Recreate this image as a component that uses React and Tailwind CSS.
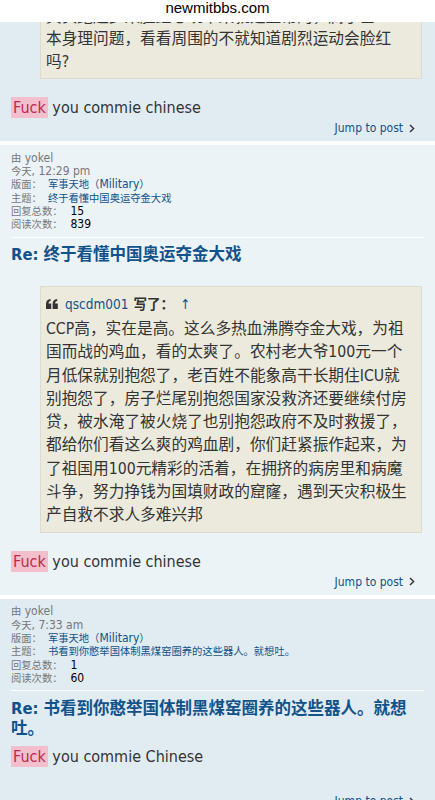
import React from 'react';

const FONT = "font-['DejaVu_Sans_Condensed','DejaVu_Sans','Noto_Sans_CJK_SC',sans-serif]";

// CJK runs in the post info block render a bit smaller than the latin text
function C({ children }) {
  return <span className="text-[10.3px]">{children}</span>;
}

function Meta({ time, topic, replies, views }) {
  return (
    <div className="text-[12px] leading-[13.3px] text-[#777]">
      <div className="h-[13.3px]"><C>由</C> yokel</div>
      <div className="h-[13.3px]"><C>今天</C>{time}</div>
      <div className="h-[13.3px]">
        <C>版面：</C>
        <span className="ml-[6px] text-[#105289]"><C>军事天地（</C>Military<C>）</C></span>
      </div>
      <div className="h-[13.3px]">
        <C>主题：</C>
        <span className="ml-[6px] text-[#105289]"><C>{topic}</C></span>
      </div>
      <div className="h-[13.3px]">
        <C>回复总数：</C>
        <span className="ml-[8px] text-black">{replies}</span>
      </div>
      <div className="h-[13.3px]">
        <C>阅读次数：</C>
        <span className="ml-[8px] text-black">{views}</span>
      </div>
    </div>
  );
}

function Fuck({ text, className = '' }) {
  return (
    <div className={`text-[16px] leading-[21px] text-[#333] ${className}`}>
      <span className="inline-block px-[2px] bg-[#f3bfcc] text-[#bc2a4d]">Fuck</span> {text}
    </div>
  );
}

function Jump({ className = '' }) {
  return (
    <div className={`flex justify-end items-center gap-[6px] pr-[9px] text-[12px] leading-[20px] text-[#105289] ${className}`}>
      <span>Jump to post</span>
      <svg width="6" height="9" viewBox="0 0 6 9" fill="none">
        <path d="M1 1L4.6 4.5L1 8" stroke="#333" strokeWidth="1.4" />
      </svg>
    </div>
  );
}

function QuoteIcon() {
  return (
    <svg width="12" height="10" viewBox="0 0 12 10" fill="#333">
      <path d="M0 5.2C0 2 1.6 0.4 4.6 0V2C3.2 2.3 2.6 3 2.5 4.4H5.2V10H0Z" />
      <path d="M6.6 5.2C6.6 2 8.2 0.4 11.2 0V2C9.8 2.3 9.2 3 9.1 4.4H11.8V10H6.6Z" />
    </svg>
  );
}

export default function App() {
  return (
    <div className={`h-[800px] overflow-hidden bg-white ${FONT}`}>
      <header className="relative z-10 h-[22px] bg-white flex justify-center">
        <span className="font-['Liberation_Sans',sans-serif] text-[15px] leading-[15px] text-black">newmitbbs.com</span>
      </header>

      {/* post partly scrolled away */}
      <div className="overflow-hidden bg-[#e1ebf2] pl-[11px] pr-[11px] pb-[3px] mb-[4px]">
        <div className="-mt-[22.5px] ml-[29px] mr-[2px] border border-[#dbdbce] bg-[#ebeadd] pl-[5px] pr-[10px] pt-[5px] pb-[5px] text-[15.7px] leading-[22.6px] text-[#333]">
          <div>其实跑起步来脸红心跳本来就是正常的，属于基</div>
          <div>本身理问题，看看周围的不就知道剧烈运动会脸红吗?</div>
        </div>
        <Fuck text="you commie chinese" className="mt-[18px]" />
        <Jump />
      </div>

      <div className="bg-[#ecf3f7] pl-[11px] pr-[11px] pt-[6.5px] pb-[3px] mb-[4px]">
        <Meta time=", 12:29 pm" topic="终于看懂中国奥运夺金大戏" replies="15" views="839" />
        <div className="mt-[5px] border-t border-white" />
        <h3 className="mt-[7.5px] pr-[4px] text-[16.5px] leading-[20px] font-bold text-[#105289]">Re: 终于看懂中国奥运夺金大戏</h3>
        <div className="mt-[21px] ml-[29px] mr-[2px] border border-[#dbdbce] bg-[#ebeadd] pl-[5px] pr-[10px] pt-[4px] pb-[6px] text-[#333]">
          <div className="flex items-center text-[13.5px] leading-[26px]">
            <QuoteIcon />
            <span className="ml-[7px] text-[#105289]">qscdm001</span>
            <span className="ml-[5px] font-bold">写了：</span>
            <span className="ml-[6px] text-[#105289]">↑</span>
          </div>
          <div className="text-[15.7px] leading-[23.25px]">
            CCP高，实在是高。这么多热血沸腾夺金大戏，为祖国而战的鸡血，看的太爽了。农村老大爷100元一个月低保就别抱怨了，老百姓不能象高干长期住ICU就别抱怨了，房子烂尾别抱怨国家没救济还要继续付房贷，被水淹了被火烧了也别抱怨政府不及时救援了，都给你们看这么爽的鸡血剧，你们赶紧振作起来，为了祖国用100元精彩的活着，在拥挤的病房里和病魔斗争，努力挣钱为国填财政的窟窿，遇到天灾积极生产自救不求人多难兴邦
          </div>
        </div>
        <Fuck text="you commie chinese" className="mt-[17.5px]" />
        <Jump />
      </div>

      <div className="bg-[#e1ebf2] pl-[11px] pr-[11px] pt-[6.5px] pb-[3px]">
        <Meta time=", 7:33 am" topic="书看到你憨举国体制黑煤窑圈养的这些器人。就想吐。" replies="1" views="60" />
        <div className="mt-[5px] border-t border-white" />
        <h3 className="mt-[7.5px] pr-[4px] text-[16.5px] leading-[20px] font-bold text-[#105289]">Re: 书看到你憨举国体制黑煤窑圈养的这些器人。就想吐。</h3>
        <Fuck text="you commie Chinese" className="mt-[7.5px]" />
        <Jump className="mt-[24px]" />
      </div>
    </div>
  );
}
